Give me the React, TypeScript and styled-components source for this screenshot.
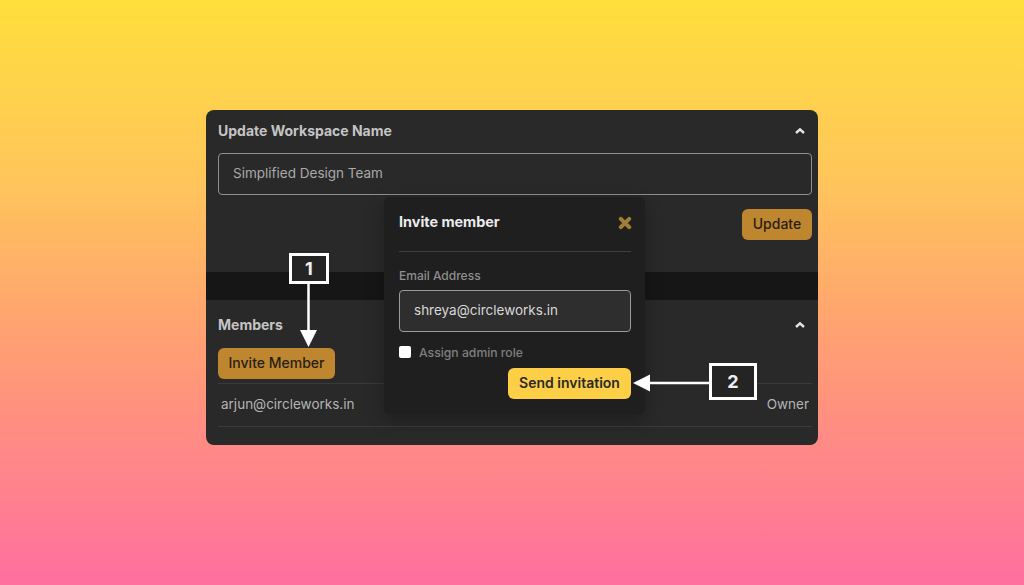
import styled, { createGlobalStyle } from "styled-components";

const GlobalStyle = createGlobalStyle`
  html, body { margin: 0; padding: 0; height: 100%; overflow: hidden; }
  body { font-family: "Inter", "Noto Sans", sans-serif; }
  * { box-sizing: border-box; }
`;

const Page = styled.div`
  position: relative;
  width: 1024px;
  height: 585px;
  padding: 110px 206px 140px;
  background: linear-gradient(180deg, #ffdf3c 0%, #ffc65a 30%, #ff9a76 62%, #ff6f9f 100%);
`;

const Panel = styled.div`
  width: 612px;
  height: 335px;
  border-radius: 8px;
  overflow: hidden;
  background: #292929;
  display: flex;
  flex-direction: column;
`;

const Section = styled.section<{ $height: number }>`
  height: ${(p) => p.$height}px;
  padding: 0 6px 0 12px;
  display: flex;
  flex-direction: column;
  align-items: stretch;
`;

const Band = styled.div`
  height: 28px;
  background: #161616;
`;

const SectionHead = styled.div<{ $top: number }>`
  height: 20px;
  margin-top: ${(p) => p.$top}px;
  display: flex;
  align-items: center;
  justify-content: space-between;
  padding-right: 6px;
`;

const SectionTitle = styled.h3`
  margin: 0;
  font-size: 14px;
  line-height: 20px;
  font-weight: 700;
  color: #c4c4c4;
`;

const Chevron = () => (
  <svg width="12" height="8" viewBox="0 0 12 8" aria-hidden="true">
    <path d="M2 6 L6 2.4 L10 6" fill="none" stroke="#e4e4e4" strokeWidth="2.4" />
  </svg>
);

const NameField = styled.div`
  height: 42px;
  margin-top: 12px;
  padding: 0 14px 2px;
  display: flex;
  align-items: center;
  border: 1px solid #8f8f8f;
  border-radius: 4px;
  font-size: 13.5px;
  color: #a9a9a9;
`;

const ActionRow = styled.div`
  margin-top: 14px;
  display: flex;
  justify-content: flex-end;
`;

const Button = styled.button<{ $bright?: boolean; $width: number }>`
  width: ${(p) => p.$width}px;
  height: 31px;
  padding: 0 0 2px;
  border: 0;
  border-radius: 6px;
  font-family: inherit;
  font-size: 14px;
  font-weight: ${(p) => (p.$bright ? 600 : 500)};
  color: ${(p) => (p.$bright ? "#2a2a2a" : "#282015")};
  background: ${(p) => (p.$bright ? "#fccf47" : "#bf8630")};
`;

const InviteWrap = styled.div`
  margin-top: 13px;
`;

const MemberRow = styled.div`
  height: 44px;
  margin-top: 4px;
  padding: 0 3px 2px;
  display: flex;
  align-items: center;
  justify-content: space-between;
  border-top: 1px solid #3a3a3a;
  border-bottom: 1px solid #3a3a3a;
  font-size: 13.5px;
  color: #b4b4b4;
`;

const Modal = styled.div`
  position: absolute;
  left: 384px;
  top: 197px;
  width: 261px;
  height: 217px;
  padding: 14px 14px 0 15px;
  border-radius: 6px;
  background: #1f1f1f;
  box-shadow: 0 6px 18px rgba(0, 0, 0, 0.28);
  display: flex;
  flex-direction: column;
`;

const ModalHead = styled.div`
  height: 20px;
  display: flex;
  align-items: center;
  justify-content: space-between;
`;

const ModalTitle = styled.h4`
  margin: 0;
  font-size: 14.4px;
  font-weight: 700;
  color: #ececec;
`;

const CloseIcon = () => (
  <svg width="14" height="14" viewBox="0 0 14 14" aria-hidden="true" style={{ marginRight: -1, marginTop: 4 }}>
    <path d="M2.8 2.8 L11.2 11.2 M11.2 2.8 L2.8 11.2" stroke="#a47c36" strokeWidth="4" strokeLinecap="round" />
  </svg>
);

const Divider = styled.hr`
  width: 100%;
  margin: 20px 0 0;
  border: 0;
  border-top: 1px solid #414141;
`;

const FieldLabel = styled.label`
  margin-top: 16px;
  font-size: 12px;
  line-height: 16px;
  font-weight: 500;
  color: #8e8e8e;
`;

const EmailField = styled.div`
  height: 42px;
  margin-top: 6px;
  padding: 0 14px 2px;
  display: flex;
  align-items: center;
  border: 1px solid #9a9a9a;
  border-radius: 4px;
  background: #2e2e2e;
  font-size: 13.5px;
  color: #d8d8d8;
`;

const CheckRow = styled.label`
  margin-top: 12px;
  display: flex;
  align-items: center;
  gap: 8px;
  font-size: 12.2px;
  line-height: 16px;
  font-weight: 500;
  color: #7f7f7f;
`;

const CheckBox = styled.span`
  width: 12px;
  height: 12px;
  border-radius: 2px;
  background: #fff;
`;

const CheckText = styled.span`
  position: relative;
  top: 1px;
`;

const ModalActions = styled.div`
  margin-top: 8px;
  display: flex;
  justify-content: flex-end;
`;

const Callout = styled.div<{ $x: number; $y: number; $w: number; $h: number }>`
  position: absolute;
  left: ${(p) => p.$x}px;
  top: ${(p) => p.$y}px;
  width: ${(p) => p.$w}px;
  height: ${(p) => p.$h}px;
  display: flex;
  align-items: center;
  justify-content: center;
  border: 3px solid #fff;
  background: #242424;
  font-size: 18px;
  font-weight: 700;
  color: #efefef;
`;

const Arrows = styled.svg`
  position: absolute;
  left: 0;
  top: 0;
  pointer-events: none;
`;

export default function App() {
  return (
    <Page>
      <GlobalStyle />
      <Panel>
        <Section $height={162}>
          <SectionHead $top={11}>
            <SectionTitle>Update Workspace Name</SectionTitle>
            <Chevron />
          </SectionHead>
          <NameField>Simplified Design Team</NameField>
          <ActionRow>
            <Button $width={70}>Update</Button>
          </ActionRow>
        </Section>
        <Band />
        <Section $height={145}>
          <SectionHead $top={15}>
            <SectionTitle>Members</SectionTitle>
            <Chevron />
          </SectionHead>
          <InviteWrap>
            <Button $width={117}>Invite Member</Button>
          </InviteWrap>
          <MemberRow>
            <span>arjun@circleworks.in</span>
            <span>Owner</span>
          </MemberRow>
        </Section>
      </Panel>

      <Modal>
        <ModalHead>
          <ModalTitle>Invite member</ModalTitle>
          <CloseIcon />
        </ModalHead>
        <Divider />
        <FieldLabel>Email Address</FieldLabel>
        <EmailField>shreya@circleworks.in</EmailField>
        <CheckRow>
          <CheckBox />
          <CheckText>Assign admin role</CheckText>
        </CheckRow>
        <ModalActions>
          <Button $bright $width={123}>Send invitation</Button>
        </ModalActions>
      </Modal>

      <Arrows width="1024" height="585" viewBox="0 0 1024 585" aria-hidden="true">
        <path d="M308.5 283 V335" stroke="#fff" strokeWidth="2.5" />
        <path d="M300 330 H317 L308.5 347 Z" fill="#fff" />
        <path d="M710 383 H645" stroke="#fff" strokeWidth="2.5" />
        <path d="M650 374.500 V391.500 L633 383 Z" fill="#fff" />
      </Arrows>
      <Callout $x={289} $y={253} $w={40} $h={31}>1</Callout>
      <Callout $x={709} $y={363} $w={48} $h={37}>2</Callout>
    </Page>
  );
}
